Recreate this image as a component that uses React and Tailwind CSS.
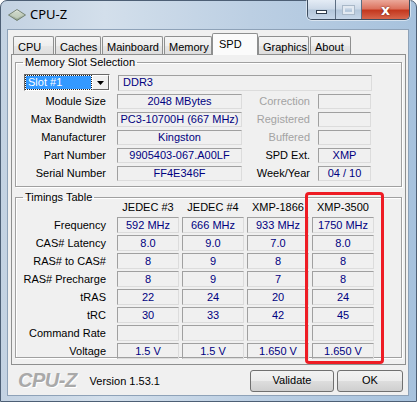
import React from "react";

const boxCls =
  "flex items-center justify-center border border-t-[#a0a0a0] border-l-[#a0a0a0] border-r-[#dcdcdc] border-b-[#dcdcdc] text-[#000080] leading-none";

function Box({ className = "", children }) {
  return <div className={boxCls + " " + className}>{children}</div>;
}

const rows1 = [
  ["Module Size", "2048 MBytes", "Correction", "", true],
  ["Max Bandwidth", "PC3-10700H (667 MHz)", "Registered", "", true],
  ["Manufacturer", "Kingston", "Buffered", "", true],
  ["Part Number", "9905403-067.A00LF", "SPD Ext.", "XMP", false],
  ["Serial Number", "FF4E346F", "Week/Year", "04 / 10", false],
];

const timings = [
  ["Frequency", "592 MHz", "666 MHz", "933 MHz", "1750 MHz"],
  ["CAS# Latency", "8.0", "9.0", "7.0", "8.0"],
  ["RAS# to CAS#", "8", "9", "8", "8"],
  ["RAS# Precharge", "8", "9", "7", "8"],
  ["tRAS", "22", "24", "20", "24"],
  ["tRC", "30", "33", "42", "45"],
  ["Command Rate", "", "", "", ""],
  ["Voltage", "1.5 V", "1.5 V", "1.650 V", "1.650 V"],
];

const tabs = [
  { t: "CPU", c: "w-[41px]" },
  { t: "Caches", c: "w-[46px] ml-[1px]" },
  { t: "Mainboard", c: "w-[61px] ml-[1px]" },
  { t: "Memory", c: "w-[48px] ml-[1px]" },
  { t: "SPD", c: "w-[46px]", sel: true },
  { t: "Graphics", c: "w-[51px]" },
  { t: "About", c: "w-[41px] ml-[1px]" },
];

function Diamond() {
  return (
    <svg width="18" height="12" viewBox="0 0 18 12">
      <defs>
        <linearGradient id="dg" x1="0" y1="0" x2="0" y2="1">
          <stop offset="0" stopColor="#e8eee4" />
          <stop offset="1" stopColor="#8fa08a" />
        </linearGradient>
      </defs>
      <polygon points="9,0.5 17.5,6 9,11.5 0.5,6" fill="url(#dg)" stroke="#5f6f5c" strokeWidth="0.8" />
      <polygon points="9,2.5 14.5,6 9,9.5 3.5,6" fill="#c9d4c4" opacity="0.7" />
    </svg>
  );
}

export default function App() {
  return (
    <div className="w-[417px] h-[402px] relative overflow-hidden font-['Liberation_Sans',Arial,sans-serif] text-[11px] text-black">
      <div className="w-[417px] h-[402px] rounded-t-[7px] border border-[#4d5f75] bg-[linear-gradient(90deg,#c3d2e2_0%,#d3dfeb_25%,#bccfe3_60%,#a7c2dd_100%)] flex flex-col">
        {/* title bar */}
        <div className="h-[27px] flex items-start relative shrink-0">
          <div className="flex items-center mt-[7px] ml-[7px]">
            <Diamond />
            <span className="ml-[4px] text-[13px] font-['Noto_Sans',sans-serif] text-black leading-none">CPU-Z</span>
          </div>
          <div className="ml-auto mr-[6px] flex h-[20px] -mt-[1px] rounded-b-[5px] border border-[#3d4d60] border-t-0 overflow-hidden shadow-[0_0_0_1px_rgba(255,255,255,0.5)]">
            <div className="w-[28px] h-full bg-[linear-gradient(180deg,#e4ecf5_0%,#cbd8e7_48%,#b3c6da_52%,#c6d6e8_100%)] border-r border-[#5d6e82] flex items-end justify-center pb-[5px]">
              <div className="w-[11px] h-[4px] bg-white border border-[#2f3d4e]" />
            </div>
            <div className="w-[26px] h-full bg-[linear-gradient(180deg,#e4ecf5_0%,#cbd8e7_48%,#b3c6da_52%,#c6d6e8_100%)] border-r border-[#5d6e82] flex items-center justify-center">
              <div className="w-[11px] h-[8px] border-[2px] border-[#e2e9f1] outline outline-1 outline-[#a9b8c8]" />
            </div>
            <div className="w-[47px] h-full bg-[linear-gradient(180deg,#eba89a_0%,#dc735f_45%,#c4381f_55%,#d7664c_100%)] flex items-center justify-center">
              <span className="text-white font-bold text-[14px] leading-none font-['DejaVu_Sans',sans-serif] [text-shadow:0_0_2px_#5a1a10]">x</span>
            </div>
          </div>
        </div>

        {/* client */}
        <div className="ml-[6px] w-[402px] h-[367px] mt-[1px] bg-[#f0f0f0] border border-[#8ea2b8] flex flex-col">
          {/* tabs */}
          <div className="h-[24px] flex items-end pl-[5px] shrink-0">
            {tabs.map((tb) =>
              tb.sel ? (
                <div
                  key={tb.t}
                  className={"h-[22px] -mb-[1px] relative z-10 bg-[#fbfbfb] border border-b-0 border-[#8e8f8f] rounded-t-[2px] pl-[6px] pt-[2px] " + tb.c}
                >
                  {tb.t}
                </div>
              ) : (
                <div
                  key={tb.t}
                  className={"h-[18px] bg-[linear-gradient(180deg,#f5f5f5_0%,#eeeeee_50%,#e6e6e6_51%,#dedede_100%)] border border-b-0 border-[#8e8f8f] rounded-t-[2px] pl-[4px] pt-[2px] " + tb.c}
                >
                  {tb.t}
                </div>
              )
            )}
          </div>

          {/* panel */}
          <div className="ml-[3px] w-[395px] h-[311px] border border-[#8e8f8f] bg-[#f0f0f0] shrink-0 flex flex-col">
            {/* group 1 */}
            <fieldset className="mx-[3px] mt-[1px] h-[131px] border border-[#a0a0a0] shadow-[inset_1px_1px_0_#fff,1px_1px_0_#fff] pt-[5px]">
              <legend className="ml-[7px] px-[2px] leading-[13px]">Memory Slot Selection</legend>
              <div className="flex items-center h-[17px]">
                <div className="ml-[8px] w-[86px] h-[17px] flex border border-t-[#696969] border-l-[#696969] border-r-white border-b-white bg-white">
                  <div className="flex-1 m-[1px] bg-[#3399ff] text-white flex items-center pl-[2px] outline-1 outline-dotted outline-[#222]">Slot #1</div>
                  <div className="w-[17px] bg-[#f0f0f0] border border-t-white border-l-white border-r-[#696969] border-b-[#696969] flex items-center justify-center">
                    <svg width="7" height="4" viewBox="0 0 7 4"><polygon points="0,0 7,0 3.5,4" fill="#000" /></svg>
                  </div>
                </div>
                <Box className="ml-[8px] w-[254px] h-[16px] !justify-start pl-[4px]">DDR3</Box>
              </div>
              {rows1.map((r) => (
                <div key={r[0]} className="flex items-center h-[15px] mt-[3px]">
                  <div className="w-[91px] text-right pr-[1px]">{r[0]}</div>
                  <Box className="ml-[10px] w-[125px] h-[15px]">{r[1]}</Box>
                  <div className={"w-[68px] text-right " + (r[4] ? "text-[#a3a3a3]" : "text-black")}>{r[2]}</div>
                  <Box className="ml-[8px] w-[53px] h-[15px]">{r[3]}</Box>
                </div>
              ))}
            </fieldset>

            {/* group 2 */}
            <fieldset className="mx-[3px] mt-[4px] h-[167px] border border-[#a0a0a0] shadow-[inset_1px_1px_0_#fff,1px_1px_0_#fff]">
              <legend className="ml-[7px] px-[2px] leading-[13px]">Timings Table</legend>
              <div className="flex h-[13px] -mt-[3px] leading-[13px]">
                <div className="w-[101px]" />
                <div className="w-[62px] text-center">JEDEC #3</div>
                <div className="w-[62px] ml-[3px] text-center">JEDEC #4</div>
                <div className="w-[62px] ml-[3px] text-center">XMP-1866</div>
                <div className="w-[62px] ml-[3px] text-center">XMP-3500</div>
              </div>
              {timings.map((r, i) => (
                <div key={r[0]} className={"flex items-center h-[16px] " + (i === 0 ? "mt-[3px]" : "mt-[2px]")}>
                  <div className="w-[91px] text-right pr-[1px]">{r[0]}</div>
                  <Box className="ml-[10px] w-[62px] h-[16px]">{r[1]}</Box>
                  <Box className="ml-[3px] w-[62px] h-[16px]">{r[2]}</Box>
                  <Box className="ml-[3px] w-[62px] h-[16px]">{r[3]}</Box>
                  <Box className="ml-[3px] w-[62px] h-[16px]">{r[4]}</Box>
                </div>
              ))}
            </fieldset>
          </div>

          {/* footer */}
          <div className="flex-1 flex items-center">
            <span className="ml-[10px] text-[20px] font-bold italic text-[#a9a9a9] leading-none tracking-[-0.5px] [text-shadow:1px_1px_0_#fff]">CPU-Z</span>
            <span className="ml-[13px] mt-[2px]">Version 1.53.1</span>
            <div className="ml-auto flex mr-[5px] mt-[1px]">
              <div className="w-[84px] h-[22px] border border-[#707070] rounded-[3px] bg-[linear-gradient(180deg,#f2f2f2_0%,#ebebeb_50%,#dddddd_51%,#cfcfcf_100%)] flex items-center justify-center">Validate</div>
              <div className="ml-[3px] w-[66px] h-[22px] border border-[#707070] rounded-[3px] bg-[linear-gradient(180deg,#f2f2f2_0%,#ebebeb_50%,#dddddd_51%,#cfcfcf_100%)] flex items-center justify-center">OK</div>
            </div>
          </div>
        </div>
      </div>

      {/* red highlight */}
      <div className="absolute left-[305px] top-[192px] w-[79px] h-[172px] border-[3px] border-[#ee1c24] rounded-[4px] pointer-events-none" />
    </div>
  );
}
